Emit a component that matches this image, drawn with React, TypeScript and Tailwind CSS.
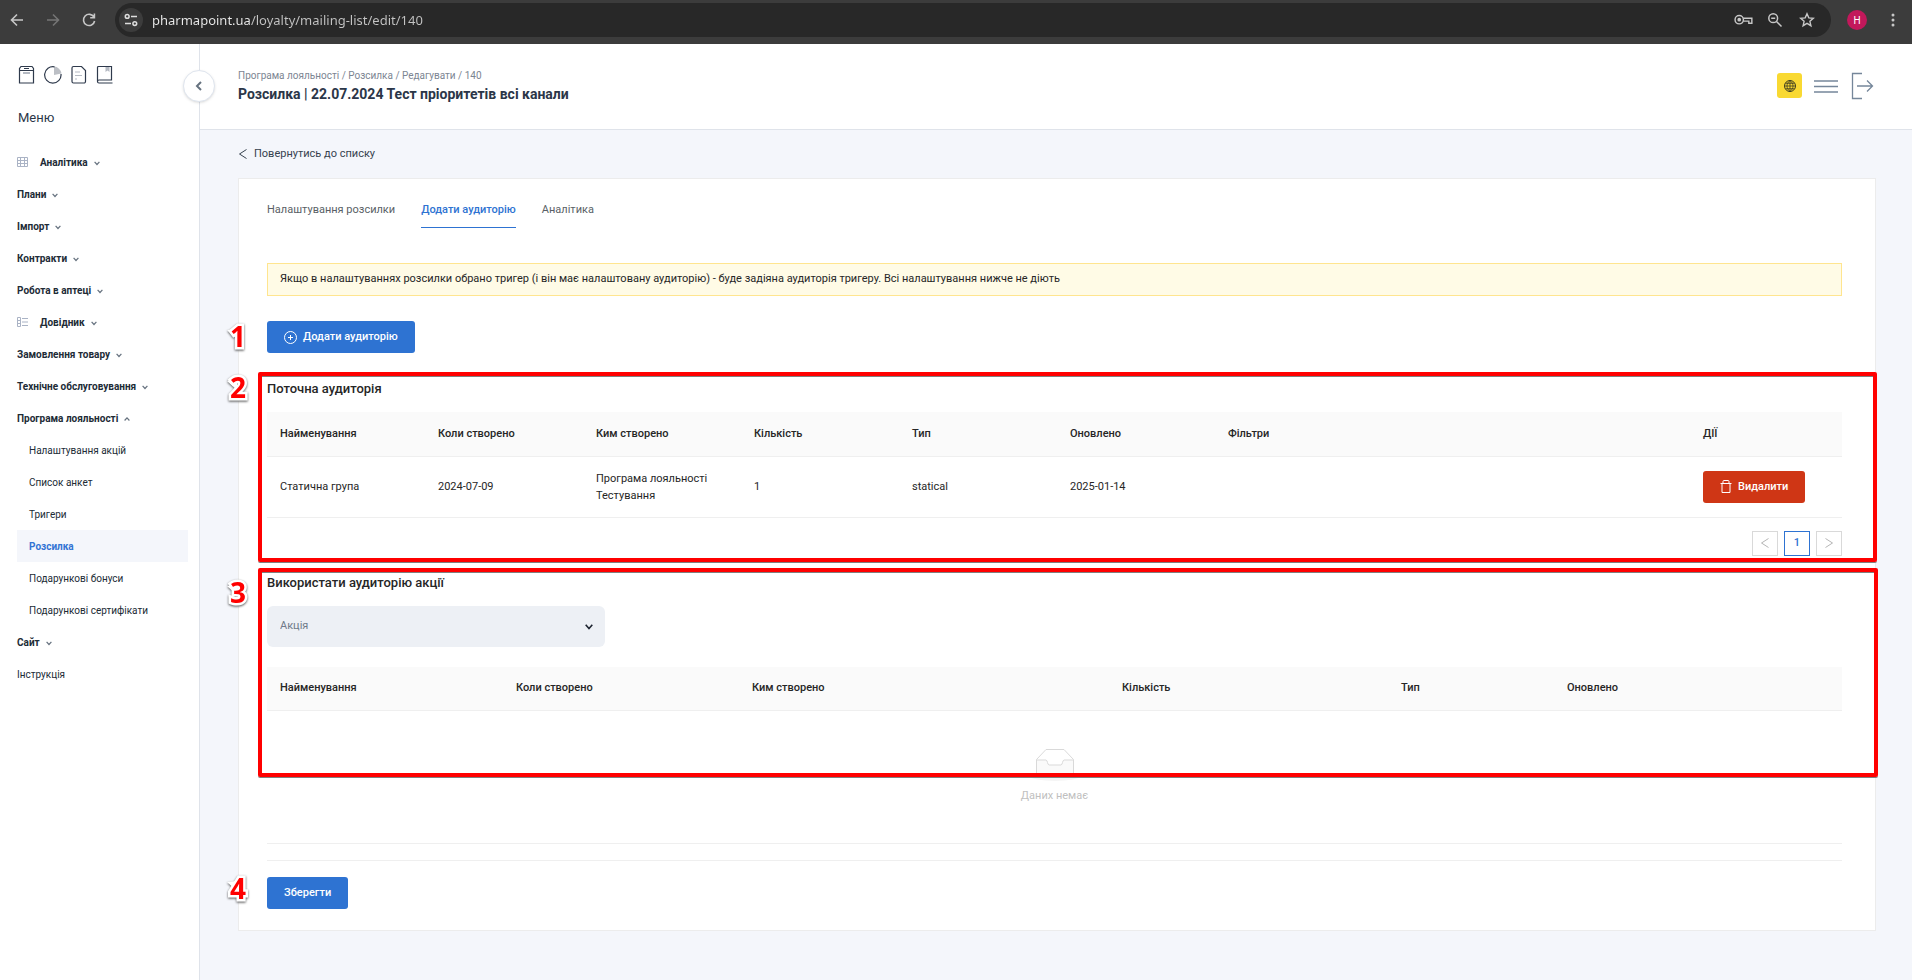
import { useState } from 'react'
import type { ReactNode } from 'react'

type MenuItem = {
  title: string
  icon?: 'grid' | 'list'
  leaf?: boolean
  children?: string[]
}

const menu: MenuItem[] = [
  { title: 'Аналітика', icon: 'grid' },
  { title: 'Плани' },
  { title: 'Імпорт' },
  { title: 'Контракти' },
  { title: 'Робота в аптеці' },
  { title: 'Довідник', icon: 'list' },
  { title: 'Замовлення товару' },
  { title: 'Технічне обслуговування' },
  {
    title: 'Програма лояльності',
    children: [
      'Налаштування акцій',
      'Список анкет',
      'Тригери',
      'Розсилка',
      'Подарункові бонуси',
      'Подарункові сертифікати',
    ],
  },
  { title: 'Сайт' },
  { title: 'Інструкція', leaf: true },
]

const tabs = ['Налаштування розсилки', 'Додати аудиторію', 'Аналітика']

const audienceColumns = [
  { title: 'Найменування', width: 'w-[158px]' },
  { title: 'Коли створено', width: 'w-[158px]' },
  { title: 'Ким створено', width: 'w-[158px]' },
  { title: 'Кількість', width: 'w-[158px]' },
  { title: 'Тип', width: 'w-[158px]' },
  { title: 'Оновлено', width: 'w-[158px]' },
  { title: 'Фільтри', width: 'w-auto' },
  { title: 'ДІЇ', width: 'w-[152px]' },
]

const promoColumns = [
  { title: 'Найменування', width: 'w-[236px]' },
  { title: 'Коли створено', width: 'w-[236px]' },
  { title: 'Ким створено', width: 'w-[370px]' },
  { title: 'Кількість', width: 'w-[279px]' },
  { title: 'Тип', width: 'w-[166px]' },
  { title: 'Оновлено', width: 'w-auto' },
]

function Chevron({
  dir,
  className,
}: {
  dir: 'up' | 'down' | 'left' | 'right'
  className: string
}) {
  const paths = {
    up: 'M1 7.5 5 3l4 4.5',
    down: 'M1 3l4 4.5L9 3',
    left: 'M8.5.5 1.5 5l7 4.5',
    right: 'M1.5.5l7 4.5-7 4.5',
  }
  return (
    <svg
      viewBox="0 0 10 10"
      className={className}
      fill="none"
      stroke="currentColor"
      aria-hidden="true"
    >
      <path d={paths[dir]} />
    </svg>
  )
}

function BrowserBar() {
  return (
    <div className="flex h-11 items-center bg-[#3c3c3c] text-[#c7c7c7]">
      <div className="mb-1 flex items-center gap-4 pl-[7px]">
        <button aria-label="Назад" className="flex size-5 items-center justify-center">
          <svg viewBox="0 0 16 16" className="size-4" fill="none" stroke="currentColor" strokeWidth="1.6">
            <path d="M14 8H3M8 2.5 2.5 8 8 13.5" />
          </svg>
        </button>
        <button aria-label="Вперед" className="flex size-5 items-center justify-center text-[#757575]">
          <svg viewBox="0 0 16 16" className="size-4" fill="none" stroke="currentColor" strokeWidth="1.6">
            <path d="M2 8h11M8 2.5 13.5 8 8 13.5" />
          </svg>
        </button>
        <button aria-label="Оновити" className="flex size-5 items-center justify-center">
          <svg viewBox="0 0 16 16" className="size-4" fill="none" stroke="currentColor" strokeWidth="1.6">
            <path d="M13 5.2A5.6 5.6 0 1 0 13.6 9M13.4 1.5v4.2H9.2" />
          </svg>
        </button>
      </div>
      <div className="mb-1 ml-4 flex h-[34px] flex-1 items-center rounded-full bg-[#282828] pr-[14px] pl-1">
        <button
          aria-label="Відомості про сайт"
          className="flex size-6 items-center justify-center rounded-full bg-[#3c3c3c]"
        >
          <svg viewBox="0 0 14 14" className="size-[14px]" fill="none" stroke="#dedede" strokeWidth="1.5">
            <circle cx="3.2" cy="3.4" r="1.9" />
            <path d="M7 3.4h6M1 10.6h6" />
            <circle cx="10.8" cy="10.6" r="1.9" />
          </svg>
        </button>
        <input
          aria-label="Адреса"
          defaultValue="pharmapoint.ua/loyalty/mailing-list/edit/140"
          className="ml-[9px] min-w-0 flex-1 bg-[linear-gradient(90deg,#ececec_98px,#c4c4c4_98px)] bg-clip-text font-[Noto_Sans,Open_Sans,sans-serif] text-[13px] leading-5 text-transparent caret-white outline-none"
        />
        <div className="flex items-center gap-3">
          <button aria-label="Паролі" className="flex size-5 items-center justify-center">
            <svg viewBox="0 0 20 12" className="w-[19px]" fill="none" stroke="currentColor" strokeWidth="1.5">
              <circle cx="5.5" cy="6" r="4.4" />
              <circle cx="5.5" cy="6" r="1.2" fill="currentColor" />
              <path d="M9.8 4.5h9v5.2h-3.2V7.5H9.8" />
            </svg>
          </button>
          <button aria-label="Масштаб" className="flex size-5 items-center justify-center">
            <svg viewBox="0 0 16 16" className="size-4" fill="none" stroke="currentColor" strokeWidth="1.5">
              <circle cx="6.2" cy="6.2" r="4.4" />
              <path d="M9.5 9.5l5 5M4.2 6.2h4" />
            </svg>
          </button>
          <button aria-label="Додати закладку" className="flex size-5 items-center justify-center">
            <svg viewBox="0 0 16 16" className="size-4" fill="none" stroke="currentColor" strokeWidth="1.4">
              <path d="M8 1.8l1.8 4.1 4.5.4-3.4 3 1 4.4L8 11.4l-3.9 2.3 1-4.4-3.4-3 4.5-.4z" />
            </svg>
          </button>
        </div>
      </div>
      <button
        aria-label="Профіль"
        className="mb-1 ml-4 size-5 rounded-full bg-[#c2185b] font-[Roboto,sans-serif] text-[10px] text-white"
      >
        H
      </button>
      <button aria-label="Меню браузера" className="mr-[9px] mb-1 ml-4 flex size-5 items-center justify-center">
        <svg viewBox="0 0 4 14" className="h-[14px] w-1" fill="currentColor">
          <circle cx="2" cy="2" r="1.5" />
          <circle cx="2" cy="7" r="1.5" />
          <circle cx="2" cy="12" r="1.5" />
        </svg>
      </button>
    </div>
  )
}

function Sidebar() {
  return (
    <aside className="relative w-[200px] shrink-0 border-r border-[#dfe3ea] bg-white">
      <div className="flex gap-2 px-[18px] pt-[21px] text-[#2f3a4c]">
        <button aria-label="Архів">
          <svg viewBox="0 0 18 20" className="h-5 w-[18px]" fill="none" stroke="currentColor" strokeWidth="1.2">
            <path d="M1.5 5.5h14v12.500h-14zM1.500 5.500V3.500l1.500-2h11l1.500 2v2M6 3.500h5" />
            <path d="M5 8h7" stroke="#b5bac3" strokeWidth="2" />
          </svg>
        </button>
        <button aria-label="Статистика">
          <svg viewBox="0 0 18 20" className="h-5 w-[18px]" fill="none" stroke="currentColor" strokeWidth="1.2">
            <path d="M10 10V1.5a8 8 0 0 1 7.500 7z" fill="#bcbfc5" stroke="none" />
            <path d="M10.500 1.800A8.200 8.200 0 1 0 17 9" />
          </svg>
        </button>
        <button aria-label="Документи">
          <svg viewBox="0 0 18 20" className="h-5 w-[18px]" fill="none" stroke="currentColor" strokeWidth="1.2">
            <path d="M3.500 1.500h8l4 4v11a1.500 1.500 0 0 1-1.500 1.500H3.500A1.500 1.500 0 0 1 2 16.500V3a1.500 1.500 0 0 1 1.500-1.500z" />
            <path d="M5 7h5M5 10.500h7M5 14h2" stroke="#b5bac3" />
          </svg>
        </button>
        <button aria-label="Довідка">
          <svg viewBox="0 0 18 20" className="h-5 w-[18px]" fill="none" stroke="currentColor" strokeWidth="1.2">
            <path d="M1.500 16.500V2.500a1 1 0 0 1 1-1h13v13.500H3a1.500 1.500 0 0 0 0 3h13.500" />
            <path d="M9.500 2h4v5l-2-1.500-2 1.500z" fill="#b5bac3" stroke="none" />
          </svg>
        </button>
      </div>
      <button
        aria-label="Згорнути меню"
        className="absolute top-[26px] -right-4 flex size-8 items-center justify-center rounded-full border border-[#dfe5ee] bg-white text-[#66727f] shadow-sm"
      >
        <svg viewBox="0 0 10 10" className="size-[10px]" fill="none" stroke="currentColor" strokeWidth="2">
          <path d="M7 1 3 5l4 4" />
        </svg>
      </button>
      <p className="px-[18px] pt-6 text-[13px] leading-[18px] text-[#2b3648]">Меню</p>
      <nav className="mt-[19px] pr-[11px] pl-[17px] text-[10px] text-[#212b36]">
        <ul>
          {menu.map((item) => (
            <li key={item.title}>
              <a href="#" className="flex h-8 items-center">
                {item.icon && (
                  <svg viewBox="0 0 11 10" className="mr-3 h-[10px] w-[11px]" fill="none" stroke="#aab3c5">
                    {item.icon === 'grid' ? (
                      <path d="M.5.5h10v9H.5zM.5 3.500h10M.5 6.500h10M3.500.5v9M7.500.5v9" />
                    ) : (
                      <path d="M.5.5h3v9h-3zM.5 3.500h3M.5 6.500h3M5 1.500h6M5 5h6M5 8.500h6" />
                    )}
                  </svg>
                )}
                {item.leaf ? (
                  <span>{item.title}</span>
                ) : (
                  <>
                    <span className="font-bold">{item.title}</span>
                    <Chevron
                      dir={item.children ? 'up' : 'down'}
                      className="mt-[2px] ml-[6px] size-[6px] stroke-2 text-[#66727f]"
                    />
                  </>
                )}
              </a>
              {item.children && (
                <ul>
                  {item.children.map((child) => (
                    <li key={child}>
                      <a
                        href="#"
                        className={
                          child === 'Розсилка'
                            ? 'flex h-8 items-center bg-[#f4f6fb] pl-3 font-bold text-[#3274d4]'
                            : 'flex h-8 items-center pl-3'
                        }
                      >
                        {child}
                      </a>
                    </li>
                  ))}
                </ul>
              )}
            </li>
          ))}
        </ul>
      </nav>
    </aside>
  )
}

function PageHeader() {
  return (
    <header className="flex h-[86px] items-center justify-between border-b border-[#dfe3ea] bg-white pr-[38px] pb-[2px] pl-[38px]">
      <div>
        <p className="text-[10px] leading-[14px] text-[#7c8592]">
          Програма лояльності / Розсилка / Редагувати / 140
        </p>
        <h1 className="mt-[2px] text-sm leading-[18px] font-bold text-[#2b3648]">
          Розсилка | 22.07.2024 Тест пріоритетів всі канали
        </h1>
      </div>
      <div className="flex items-center gap-3 text-[#75869a]">
        <button aria-label="Мова" className="flex size-[25px] items-center justify-center rounded-[3px] bg-[#f9d932]">
          <svg viewBox="0 0 12 12" className="size-3" fill="none" stroke="#3d3d22">
            <circle cx="6" cy="6" r="5.500" />
            <path d="M6 .5v11M.5 6h11M1.500 3.300h9M1.500 8.700h9M6 .5c-4 3-4 8 0 11M6 .5c4 3 4 8 0 11" strokeWidth=".8" />
          </svg>
        </button>
        <button aria-label="Меню">
          <svg viewBox="0 0 24 14" className="h-[14px] w-6" fill="none" stroke="currentColor" strokeWidth="1.500">
            <path d="M0 2h24M0 7.500h24M0 13h24" />
          </svg>
        </button>
        <button aria-label="Вийти">
          <svg viewBox="0 0 24 28" className="h-7 w-6" fill="none" stroke="currentColor" strokeWidth="1.300">
            <path d="M12 1.500H2.500v25H12M7 14h15M17 8.500l5.500 5.500-5.500 5.500" />
          </svg>
        </button>
      </div>
    </header>
  )
}

// Numbered callout that hangs over the left edge of the card
function Marker({ children, top }: { children: ReactNode; top: string }) {
  return (
    <div className={`pointer-events-none absolute -left-[37px] drop-shadow-[0_1px_1px_#555] ${top}`}>
      <svg viewBox="0 0 12 12" className="absolute top-[9px] -left-[3px] size-3" fill="#fff">
        <path d="M0 1l10-1v10z" />
      </svg>
      <span className="relative font-[Open_Sans,sans-serif] text-[28px] leading-8 font-bold text-[#f00] [-webkit-text-stroke:5px_#fff] [paint-order:stroke_fill]">
        {children}
      </span>
    </div>
  )
}

function Frame({ className }: { className: string }) {
  return (
    <div
      className={`pointer-events-none absolute -left-[9px] rounded-[2px] border-4 border-[#f00] shadow-[0_1px_0_#808080,inset_0_1px_0_#808080] ${className}`}
    />
  )
}

function TableHead({ columns }: { columns: { title: string; width: string }[] }) {
  return (
    <thead>
      <tr className="h-11 border-b border-[#efefef] bg-[#fafafa]">
        {columns.map((column) => (
          <th key={column.title} className={`pl-[13px] text-left font-medium ${column.width}`}>
            {column.title}
          </th>
        ))}
      </tr>
    </thead>
  )
}

function CurrentAudience() {
  return (
    <section className="relative mt-[19px] pt-2 pb-[6px]">
      <Marker top="-top-px">2</Marker>
      <h2 className="text-[13px] leading-[18px] font-medium">Поточна аудиторія</h2>
      <table className="mt-[14px] w-full table-fixed border-collapse leading-[17px]">
        <TableHead columns={audienceColumns} />
        <tbody>
          <tr className="h-[61px] border-b border-[#efefef]">
            <td className="pl-[13px]">Статична група</td>
            <td className="pl-[13px]">2024-07-09</td>
            <td className="pl-[13px]">Програма лояльності Тестування</td>
            <td className="pl-[13px]">1</td>
            <td className="pl-[13px]">statical</td>
            <td className="pl-[13px]">2025-01-14</td>
            <td />
            <td className="pl-[13px]">
              <button className="flex h-8 items-center gap-[6px] rounded-[3px] bg-[#cf3615] px-[17px] font-medium text-white">
                <svg viewBox="0 0 12 13" className="h-[13px] w-3" fill="none" stroke="currentColor">
                  <path d="M.5 3.500h11M3 3.500V1.500q0-1 1-1h4q1 0 1 1v2M2 3.500V12.500h8V3.500" />
                </svg>
                Видалити
              </button>
            </td>
          </tr>
        </tbody>
      </table>
      <div className="mt-[13px] flex justify-end gap-[6px]">
        <button
          aria-label="Попередня сторінка"
          className="flex h-[25px] w-[26px] items-center justify-center border border-[#d9d9d9] text-[#b5b5b5]"
        >
          <Chevron dir="left" className="size-[10px]" />
        </button>
        <button className="h-[25px] w-[26px] border border-[#2e73d2] font-medium text-[#2e73d2]">1</button>
        <button
          aria-label="Наступна сторінка"
          className="flex h-[25px] w-[26px] items-center justify-center border border-[#d9d9d9] text-[#b5b5b5]"
        >
          <Chevron dir="right" className="size-[10px]" />
        </button>
      </div>
      <Frame className="inset-y-0 -right-[35px]" />
    </section>
  )
}

function PromoAudience() {
  return (
    <section className="relative mt-[6px] pt-[6px]">
      <Marker top="top-2">3</Marker>
      <h2 className="text-[13px] leading-[18px] font-medium">Використати аудиторію акції</h2>
      <div className="relative mt-[14px] w-[338px]">
        <select
          aria-label="Акція"
          className="block h-[41px] w-full appearance-none rounded-md bg-[#edf0f5] px-[13px] text-[#6f7a89]"
        >
          <option>Акція</option>
        </select>
        <svg
          viewBox="0 0 8 6"
          className="pointer-events-none absolute top-[18px] right-3 h-[6px] w-2"
          fill="none"
          stroke="#1d2430"
          strokeWidth="1.600"
        >
          <path d="M.7.8 4 4.500 7.300.8" />
        </svg>
      </div>
      <table className="mt-5 w-full table-fixed border-collapse">
        <TableHead columns={promoColumns} />
        <tbody>
          <tr className="h-[133px] border-b border-[#efefef]">
            <td colSpan={6}>
              <div className="flex flex-col items-center gap-[7px] text-[#bfbfbf]">
                {/* empty box */}
                <svg viewBox="0 0 50 32" className="h-8 w-[50px]" fill="none" stroke="#d9d9d9">
                  <ellipse cx="25" cy="27" rx="25" ry="5" fill="#f5f5f5" stroke="none" />
                  <path d="M6.500 10.500 16 .5h18l9.500 10v16a2 2 0 0 1-2 2h-33a2 2 0 0 1-2-2z" fill="#fff" />
                  <path
                    d="M6.500 11h9.500c1.500 0 1.500 5 3 5h12c1.500 0 1.500-5 3-5h9.500v15.500a2 2 0 0 1-2 2h-33a2 2 0 0 1-2-2z"
                    fill="#fafafa"
                  />
                </svg>
                Даних немає
              </div>
            </td>
          </tr>
        </tbody>
      </table>
      <Frame className="top-0 -right-9 h-[209px]" />
    </section>
  )
}

export default function App() {
  const [activeTab, setActiveTab] = useState(1)

  return (
    <div className="flex min-h-screen flex-col font-[Roboto,sans-serif] text-[11px] text-[#262626]">
      <BrowserBar />
      <div className="flex flex-1">
        <Sidebar />
        <div className="min-w-0 flex-1 bg-[#f4f6fb]">
          <PageHeader />
          <main className="pr-9 pb-12 pl-[38px]">
            <a href="#" className="flex h-12 w-fit items-center gap-[6px] text-[#36424f]">
              <Chevron dir="left" className="size-[10px]" />
              Повернутись до списку
            </a>
            <div className="relative border border-[#ececec] bg-white pt-3 pr-[33px] pb-[21px] pl-7">
              <div role="tablist" className="flex gap-[26px]">
                {tabs.map((tab, i) => (
                  <button
                    key={tab}
                    role="tab"
                    aria-selected={i === activeTab}
                    onClick={() => setActiveTab(i)}
                    className={
                      i === activeTab
                        ? 'h-[37px] border-b border-[#2e73d2] pt-[2px] font-medium text-[#2e73d2]'
                        : 'h-[37px] border-b border-transparent pt-[2px] text-[#595f66]'
                    }
                  >
                    {tab}
                  </button>
                ))}
              </div>
              <p className="mt-[35px] flex h-[33px] items-center border border-[#ffe58f] bg-[#fffbe6] px-3">
                Якщо в налаштуваннях розсилки обрано тригер (і він має налаштовану аудиторію) - буде задіяна
                аудиторія тригеру. Всі налаштування нижче не діють
              </p>
              <div className="relative mt-[25px]">
                <Marker top="-top-px">1</Marker>
                <button className="flex h-8 items-center gap-[6px] rounded-[3px] bg-[#2e73d2] px-[17px] font-medium text-white">
                  <svg viewBox="0 0 13 13" className="size-[13px]" fill="none" stroke="currentColor">
                    <circle cx="6.500" cy="6.500" r="6" />
                    <path d="M6.500 4v5M4 6.500h5" />
                  </svg>
                  Додати аудиторію
                </button>
              </div>
              <CurrentAudience />
              <PromoAudience />
              <div className="relative mt-4 border-t border-[#efefef] pt-4">
                <Marker top="top-[11px]">4</Marker>
                <button className="h-8 rounded-[3px] bg-[#2e73d2] px-[17px] font-medium text-white">Зберегти</button>
              </div>
            </div>
          </main>
        </div>
      </div>
    </div>
  )
}
